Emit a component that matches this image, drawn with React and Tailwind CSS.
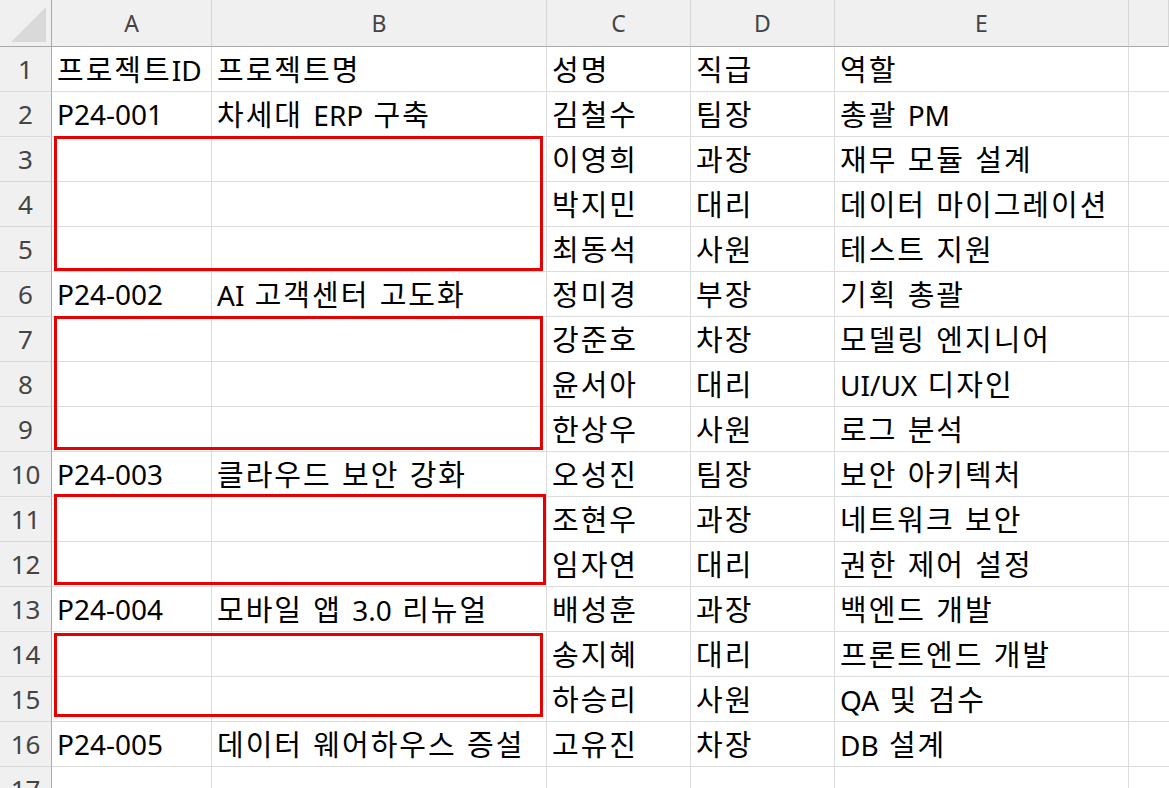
import React from "react";

const rows = [
  ["프로젝트ID", "프로젝트명", "성명", "직급", "역할"],
  ["P24-001", "차세대 ERP 구축", "김철수", "팀장", "총괄 PM"],
  ["", "", "이영희", "과장", "재무 모듈 설계"],
  ["", "", "박지민", "대리", "데이터 마이그레이션"],
  ["", "", "최동석", "사원", "테스트 지원"],
  ["P24-002", "AI 고객센터 고도화", "정미경", "부장", "기획 총괄"],
  ["", "", "강준호", "차장", "모델링 엔지니어"],
  ["", "", "윤서아", "대리", "UI/UX 디자인"],
  ["", "", "한상우", "사원", "로그 분석"],
  ["P24-003", "클라우드 보안 강화", "오성진", "팀장", "보안 아키텍처"],
  ["", "", "조현우", "과장", "네트워크 보안"],
  ["", "", "임자연", "대리", "권한 제어 설정"],
  ["P24-004", "모바일 앱 3.0 리뉴얼", "배성훈", "과장", "백엔드 개발"],
  ["", "", "송지혜", "대리", "프론트엔드 개발"],
  ["", "", "하승리", "사원", "QA 및 검수"],
  ["P24-005", "데이터 웨어하우스 증설", "고유진", "차장", "DB 설계"],
  ["", "", "", "", ""],
];

const cols = ["A", "B", "C", "D", "E", ""];

const boxes = [
  "left-[54px] top-[136px] w-[489px] h-[135px]",
  "left-[54px] top-[316px] w-[489px] h-[134px]",
  "left-[54px] top-[494px] w-[492px] h-[91px]",
  "left-[54px] top-[633px] w-[489px] h-[84px]",
];

function CellText({ text }) {
  const parts = text.split(/([\uAC00-\uD7A3]+)/).filter((p) => p !== "");
  return (
    <span className="leading-none [word-spacing:3px]">
      {parts.map((p, i) =>
        /[\uAC00-\uD7A3]/.test(p) ? (
          <span key={i} className="text-[29px] tracking-[2px]">{p}</span>
        ) : (
          <span key={i}>{p}</span>
        )
      )}
    </span>
  );
}

export default function App() {
  const font = { fontFamily: '"Noto Sans", "Noto Sans CJK KR", sans-serif' };
  return (
    <div className="relative w-[1169px] h-[788px] overflow-hidden bg-white" style={font}>
      <div className="grid grid-cols-[52px_160px_335px_144px_144px_294px_1fr]">
        <div className="h-[47px] bg-[#f0f0f0] border-r border-b border-[#a9a9a9] flex items-end justify-end">
          <svg width="36" height="36" viewBox="0 0 36 36" className="mr-[4px] mb-[3px]">
            <polygon points="35,0 35,35 0,35" fill="#d9d9d9" />
          </svg>
        </div>
        {cols.map((c, i) => (
          <div
            key={i}
            className="h-[47px] bg-[#f0f0f0] border-r border-[#d6d6d6] border-b-[1px] border-b-[#a9a9a9] flex items-center justify-center text-[23px] text-[#444444]"
          >
            {c}
          </div>
        ))}
        {rows.map((r, ri) => (
          <React.Fragment key={ri}>
            <div className="h-[45px] bg-[#f0f0f0] border-r border-r-[#a9a9a9] border-b border-b-[#d9d9d9] flex items-center justify-center text-[26px] text-[#444444]">
              {ri + 1}
            </div>
            {r.map((t, ci) => (
              <div
                key={ci}
                className="h-[45px] border-r border-b border-[#dcdcdc] flex items-center pl-[5px] text-[28px] text-black whitespace-nowrap overflow-visible"
              >
                <CellText text={t} />
              </div>
            ))}
            <div className="h-[45px] border-b border-[#dcdcdc]" />
          </React.Fragment>
        ))}
      </div>
      {boxes.map((b, i) => (
        <div key={i} className={`absolute border-[3px] border-[#e60000] pointer-events-none ${b}`} />
      ))}
    </div>
  );
}
